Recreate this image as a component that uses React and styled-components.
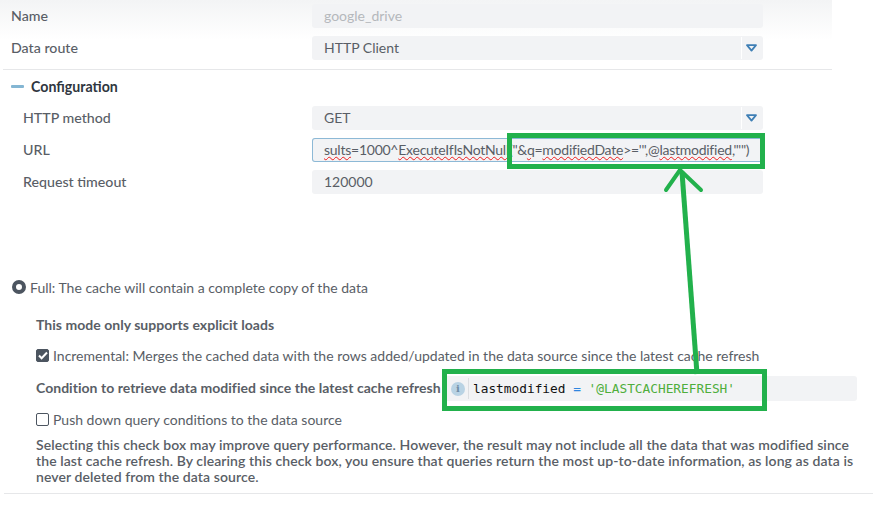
import React from 'react';
import styled, { createGlobalStyle } from 'styled-components';

const Global = createGlobalStyle`
  html, body { margin: 0; padding: 0; background: #fff; }
  body { font-family: "Lato", "Open Sans", sans-serif; font-size: 14px; color: #595e66; }
`

const Page = styled.div`
  position: relative;
  width: 879px;
  height: 508px;
  overflow: hidden;
`

const TopFade = styled.div`
  position: absolute;
  top: 0;
  left: 0;
  width: 832px;
  height: 40px;
  background: linear-gradient(#f3f4f5, #ffffff);
`

const Form = styled.div`
  position: relative;
  width: 832px;
  padding-top: 4px;
`

const Row = styled.div`
  display: grid;
  grid-template-columns: ${p => (p.$nested ? '289px' : '301px')} 451px;
  padding-left: ${p => (p.$nested ? '23px' : '11px')};
  align-items: center;
  height: 24px;
  margin-bottom: 8px;
`

const Label = styled.label`
  font-size: 14.2px;
  font-weight: 500;
  color: #595e66;
  margin-bottom: 2px;
`

const Field = styled.div`
  position: relative;
  height: 24px;
  box-sizing: border-box;
  padding: 0 12px;
  border-radius: 3px;
  background: #f2f3f5;
  font-size: 14px;
  line-height: 24px;
  color: ${p => (p.$disabled ? '#b5b8bc' : '#595e66')};
  white-space: nowrap;
  overflow: hidden;
  ${p => p.$focus && 'box-shadow: inset 0 0 0 1px #8db9d6; letter-spacing: -0.25px;'}
`

const Caret = styled.span`
  position: absolute;
  right: 0;
  top: 1px;
  bottom: 1px;
  width: 22px;
  padding-right: 2px;
  box-sizing: border-box;
  border-left: 1px solid #ffffff;
  display: flex;
  align-items: center;
  justify-content: center;
`

const Divider = styled.hr`
  border: 0;
  height: 1px;
  margin: ${p => p.$margin || 0};
  background: #e6e7e9;
`

const SectionHead = styled.div`
  display: flex;
  align-items: center;
  gap: 7px;
  height: 18px;
  padding-left: 11px;
  margin: 7px 0 11px;
  font-size: 14.2px;
  font-weight: 700;
  color: #2f3640;
`

const Minus = styled.span`
  width: 13px;
  height: 3px;
  border-radius: 1px;
  background: #84b6d3;
`

const Misspelled = styled.span`
  text-decoration: underline wavy #ee1c1c 1px;
  text-underline-offset: 1px;
`

const Cache = styled.div`
  margin-top: 84px;
  padding-left: 12px;
`

const RadioRow = styled.div`
  display: flex;
  align-items: center;
  gap: 4px;
  height: 18px;
  font-size: 14px;
`

const Radio = styled.span`
  width: 14px;
  height: 14px;
  box-sizing: border-box;
  border-radius: 50%;
  border: 4px solid #4c5560;
  background: #fff;
`

const Options = styled.div`
  padding-left: 24px;
`

const Strong = styled.div`
  font-size: 14px;
  font-weight: 700;
  letter-spacing: 0.03px;
  color: #595e66;
  white-space: nowrap;
  margin-top: ${p => p.$top || 0}px;
`

const CheckRow = styled.div`
  display: flex;
  align-items: center;
  gap: 4px;
  height: 18px;
  margin-top: ${p => p.$top || 0}px;
  font-size: 14px;
  white-space: nowrap;
`

const Box = styled.span`
  width: 13px;
  height: 13px;
  box-sizing: border-box;
  border-radius: 2px;
  display: flex;
  align-items: center;
  justify-content: center;
  border: 1.5px solid #4c5560;
  background: ${p => (p.$checked ? '#4c5560' : '#fff')};
`

const ConditionRow = styled.div`
  display: flex;
  align-items: center;
  justify-content: space-between;
  width: 821px;
  height: 25px;
  margin: 11px 0 10px;
`

const Editor = styled.div`
  display: flex;
  align-items: center;
  width: 412px;
  height: 25px;
  margin-top: 2px;
  border-radius: 3px;
  background: #f2f3f5;
`

const Gutter = styled.span`
  display: flex;
  align-items: center;
  justify-content: flex-end;
  box-sizing: border-box;
  width: 24px;
  height: 21px;
  padding-right: 3px;
  margin-right: 4px;
  border-right: 1px solid #dcdee1;
`

const Info = styled.span`
  width: 14px;
  height: 14px;
  border-radius: 50%;
  background: #b9d3e4;
  color: #6f8ea6;
  font: 700 10px/14px "DejaVu Serif", serif;
  text-align: center;
`

const Code = styled.code`
  font-family: "DejaVu Sans Mono", monospace;
  font-size: 12.8px;
  color: #111111;
  white-space: pre;
`

const Op = styled.span`
  color: #2f86e0;
`

const Str = styled.span`
  color: #4fae3c;
`

const Help = styled.p`
  margin: 9px 0 8px;
  font-size: 14px;
  line-height: 16px;
  font-weight: 600;
  letter-spacing: 0.085px;
  color: #595e66;
  width: 822px;
`

const Callout = styled.div`
  position: absolute;
  box-sizing: border-box;
  border: 5px solid #22b14c;
  left: ${p => p.$x}px;
  top: ${p => p.$y}px;
  width: ${p => p.$w}px;
  height: ${p => p.$h}px;
`

const Arrow = styled.svg`
  position: absolute;
  left: 0;
  top: 0;
  pointer-events: none;
`

const DownCaret = () => (
  <svg width="11" height="8" viewBox="0 0 11 8">
    <path d="M1 1.2h9L5.5 6.6z" fill="none" stroke="#3f7fb5" strokeWidth="1.8" strokeLinejoin="round" />
  </svg>
)

const App = () => (
  <Page>
    <Global />
    <TopFade />
    <Form>
      <Row>
        <Label>Name</Label>
        <Field $disabled>google_drive</Field>
      </Row>
      <Row>
        <Label>Data route</Label>
        <Field>HTTP Client<Caret><DownCaret /></Caret></Field>
      </Row>
      <Divider $margin="9px 0 0 3px" />
      <SectionHead><Minus />Configuration</SectionHead>
      <Row $nested>
        <Label>HTTP method</Label>
        <Field>GET<Caret><DownCaret /></Caret></Field>
      </Row>
      <Row $nested>
        <Label>URL</Label>
        <Field $focus>
          <Misspelled>sults</Misspelled>=1000^<Misspelled>ExecuteIfIsNotNull</Misspelled>("&amp;<Misspelled>q</Misspelled>=<Misspelled>modifiedDate</Misspelled>&gt;='",@<Misspelled>lastmodified</Misspelled>,"'")
        </Field>
      </Row>
      <Row $nested>
        <Label>Request timeout</Label>
        <Field>120000</Field>
      </Row>
    </Form>
    <Cache>
      <RadioRow><Radio />Full: The cache will contain a complete copy of the data</RadioRow>
      <Options>
        <Strong $top={20}>This mode only supports explicit loads</Strong>
        <CheckRow $top={13}>
          <Box $checked>
            <svg width="10" height="9" viewBox="0 0 10 9"><path d="M1 4.5l2.6 2.7L9 1.5" fill="none" stroke="#fff" strokeWidth="2" /></svg>
          </Box>
          Incremental: Merges the cached data with the rows added/updated in the data source since the latest cache refresh
        </CheckRow>
        <ConditionRow>
          <Strong>Condition to retrieve data modified since the latest cache refresh</Strong>
          <Editor>
            <Gutter><Info>i</Info></Gutter>
            <Code>lastmodified <Op>=</Op> <Str>'@LASTCACHEREFRESH'</Str></Code>
          </Editor>
        </ConditionRow>
        <CheckRow><Box />Push down query conditions to the data source</CheckRow>
        <Help>
          Selecting this check box may improve query performance. However, the result may not include all the data that was modified since the last cache refresh. By clearing this check box, you ensure that queries return the most up-to-date information, as long as data is never deleted from the data source.
        </Help>
      </Options>
    </Cache>
    <Divider $margin="0 6px 0 4px" />
    <Callout $x={507} $y={133} $w={258} $h={36} />
    <Callout $x={442} $y={369} $w={325} $h={42} />
    <Arrow width="879" height="508" viewBox="0 0 879 508">
      <path d="M682 172L697 374" fill="none" stroke="#22b14c" strokeWidth="5" />
      <path d="M680 170L666 190M680 170L701 190" fill="none" stroke="#22b14c" strokeWidth="4" strokeLinecap="round" />
    </Arrow>
  </Page>
)

export default App;
